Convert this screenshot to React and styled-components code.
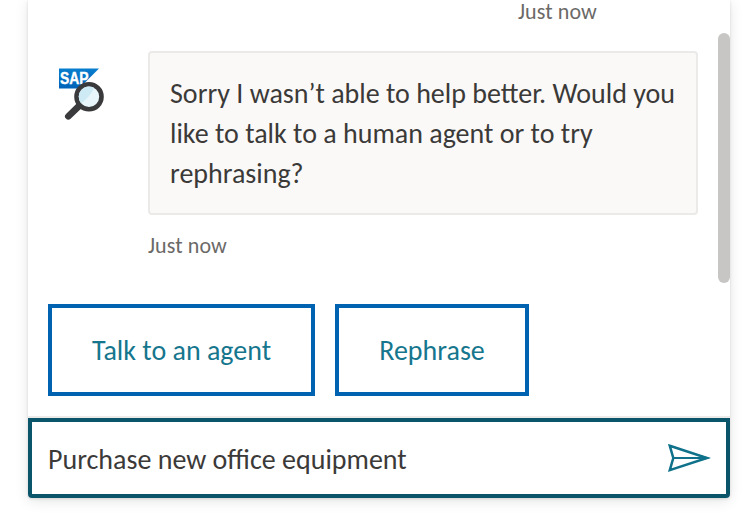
import React from "react";
import styled, { createGlobalStyle } from "styled-components";

const GlobalStyle = createGlobalStyle`
  * { box-sizing: border-box; }
  body {
    margin: 0;
    height: 527px;
    overflow: hidden;
    background: #fff;
    font-family: Calibri, Carlito, Lato, sans-serif;
  }
`;

const Panel = styled.main`
  width: 702px;
  height: 498px;
  margin-left: 28px;
  display: flex;
  flex-direction: column;
  background: #fff;
  border-radius: 0 0 4px 4px;
  box-shadow: 0 3px 14px rgba(0, 0, 0, 0.1), 0 1px 3px rgba(0, 0, 0, 0.12);
`;

const Transcript = styled.section`
  height: 284px;
  display: flex;
  justify-content: space-between;
`;

const Messages = styled.div`
  width: 670px;
  padding-left: 20px;
  display: flex;
  flex-direction: column;
`;

const Stamp = styled.time`
  display: block;
  height: 26px;
  line-height: 26px;
  font-size: 22px;
  letter-spacing: 0.1px;
  color: #6b6967;
  white-space: nowrap;
`;

const OutgoingStamp = styled(Stamp)`
  align-self: flex-end;
  width: 180px;
  height: 24px;
  line-height: 24px;
`;

const MessageRow = styled.article`
  display: grid;
  grid-template-columns: 100px 550px;
  margin-top: 27px;
`;

const Avatar = styled.svg`
  display: block;
  width: 50px;
  height: 60px;
  margin: 14px 0 0 9px;
`;

const Bubble = styled.p`
  height: 164px;
  margin: 0 0 18px;
  padding: 21px 18px 19px 20px;
  border: 2px solid #ebeae9;
  border-radius: 4px;
  background: #faf9f8;
  color: #3b3a39;
  font-size: 28px;
  line-height: 40px;
`;

const ScrollThumb = styled.div`
  width: 12px;
  height: 250px;
  margin-top: 33px;
  border-radius: 6px;
  background: #c8c6c4;
`;

const Actions = styled.div`
  height: 132px;
  padding: 20px;
  display: flex;
  gap: 20px;
`;

const ActionButton = styled.button`
  width: ${(p) => p.$width};
  height: 92px;
  padding: 0;
  border: 4px solid #0063b1;
  background: #fff;
  color: #15768d;
  font: inherit;
  font-size: 28px;
  white-space: nowrap;
`;

const Composer = styled.form`
  height: 82px;
  border-top: 2px solid #edebe9;
`;

const ComposerField = styled.div`
  height: 80px;
  padding: 0 15px 0 16px;
  display: flex;
  align-items: center;
  justify-content: space-between;
  border: 4px solid #0b556a;
  border-radius: 0 0 4px 4px;
  color: #3b3a39;
  font-size: 28px;
`;

const Draft = styled.span`
  padding-top: 2px;
`;

const SendIcon = styled.svg`
  display: block;
  width: 44px;
  height: 30px;
`;

export default function App() {
  return (
    <>
      <GlobalStyle />
      <Panel>
        <Transcript>
          <Messages>
            <OutgoingStamp>Just now</OutgoingStamp>
            <MessageRow>
              <Avatar viewBox="0 0 50 60" aria-label="SAP search">
                <defs>
                  <linearGradient id="sap" x2="0" y2="1">
                    <stop stopColor="#087dce" />
                    <stop offset="1" stopColor="#0063b8" />
                  </linearGradient>
                </defs>
                <path d="M2 3.5H42L22 23.5H2Z" fill="url(#sap)" />
                <text x="3" y="18.7" fill="#fff" stroke="#fff" strokeWidth="0.4" fontFamily="Liberation Sans" fontWeight="700" fontSize="16" textLength="28.5" lengthAdjust="spacingAndGlyphs">SAP</text>
                <path d="M22 41L11.3 51.3" stroke="#3a3a3c" strokeWidth="6.6" strokeLinecap="round" />
                <circle cx="32" cy="31.7" r="12.5" fill="#e8f6fb" stroke="#3a3a3c" strokeWidth="4.6" />
                <path d="M24 38.2A10.3 10.3 0 0 1 37 22.7Q34 31 24 38.2Z" fill="#cdeaf5" />
              </Avatar>
              <div>
                <Bubble>
                  Sorry I wasn’t able to help better. Would you like to talk to a human agent or to try rephrasing?
                </Bubble>
                <Stamp>Just now</Stamp>
              </div>
            </MessageRow>
          </Messages>
          <ScrollThumb />
        </Transcript>
        <Actions>
          <ActionButton type="button" $width="267px">Talk to an agent</ActionButton>
          <ActionButton type="button" $width="194px">Rephrase</ActionButton>
        </Actions>
        <Composer>
          <ComposerField>
            <Draft>Purchase new office equipment</Draft>
            <SendIcon viewBox="0 0 44 30" aria-label="Send">
              <path d="M2.8 2.8L40 15L2.8 27.2L6.3 15Z" fill="none" stroke="#0f728a" strokeWidth="2.5" />
              <path d="M6 15H40" stroke="#0f728a" strokeWidth="2" />
              <path d="M34 12.2L43 15L34 17.8Z" fill="#0f728a" />
            </SendIcon>
          </ComposerField>
        </Composer>
      </Panel>
    </>
  );
}
